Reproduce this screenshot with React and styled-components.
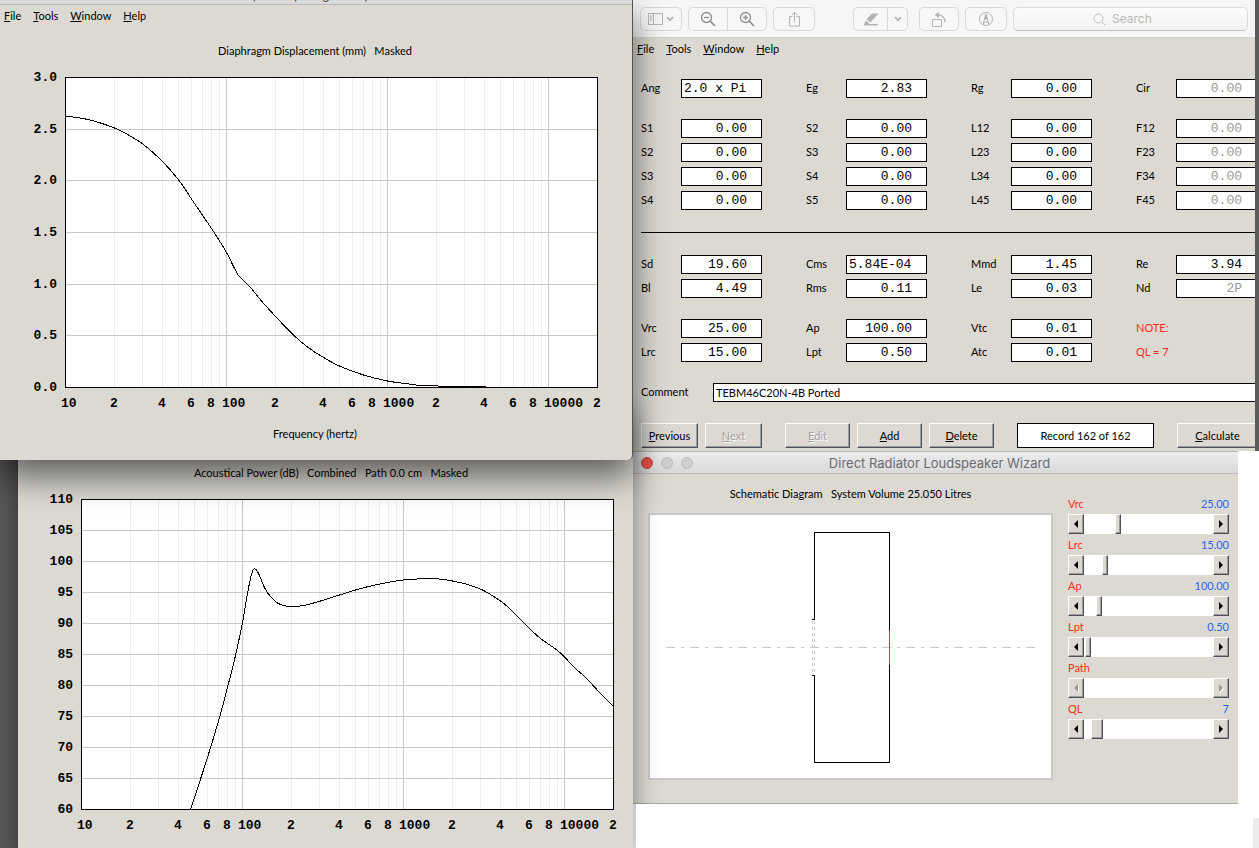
import React from "react";
import styled, { createGlobalStyle, css } from "styled-components";

const ui = `Lato, "Liberation Sans", Arial, sans-serif`;
const mono = `"Liberation Mono", "Courier New", monospace`;
const system = `Inter, Roboto, sans-serif`;
const face = "#dcd9d2";
const ruled = "#c8c8c8";

const Global = createGlobalStyle`
  *, *::before, *::after { box-sizing: border-box; }
  body {
    margin: 0;
    font-family: ${ui};
    font-size: 11px;
    line-height: 16px;
    color: #000;
  }
  button, input { font: inherit; color: inherit; margin: 0; }
`;

/* ---------- desktop and windows ---------- */

const Desktop = styled.main`
  position: relative;
  min-height: 100vh;
  overflow: hidden;
  background: #5a5a5a;
`;

const Window = styled.section`
  position: absolute;
  display: flex;
  flex-direction: column;
  overflow: hidden;
  background: ${face};
`;

const Page = styled(Window)`
  top: 451px;
  left: 633px;
  right: 0;
  bottom: 0;
  background: #fff;
`;

const PageFoot = styled(Window)`
  top: 804px;
  left: 636px;
  right: 0;
  bottom: 0;
  align-items: flex-end;
  justify-content: flex-end;
  background: #fff;
`;

const PageCorner = styled.div`
  width: 6px;
  height: 30px;
  background: #ececec;
`;

const RecordWindow = styled(Window)`
  top: 0;
  left: 633px;
  right: 4px;
  height: 451px;
`;

const WizardWindow = styled(Window)`
  top: 451px;
  left: 633px;
  right: 21px;
  height: 353px;
  border-top: 1px solid #b9b7b2;
  border-bottom: 1px solid #a9a8a4;
`;

const PowerWindow = styled(Window)`
  top: 403px;
  left: 18px;
  width: 615px;
  bottom: 0;
  box-shadow: 0 10px 24px rgba(0, 0, 0, 0.45);
`;

const DisplacementWindow = styled(Window)`
  top: 0;
  left: 0;
  width: 633px;
  height: 460px;
  border-right: 1px solid #55544f;
  border-radius: 0 0 5px 0;
  box-shadow: 0 16px 34px rgba(0, 0, 0, 0.58);
`;

const ClippedTitle = styled.header`
  display: flex;
  flex: none;
  justify-content: center;
  align-items: flex-end;
  height: 5px;
  padding-bottom: 2px;
  overflow: hidden;
  border-bottom: 1px solid #b9bbbe;
  background: #dadada;
  font: 13px/16px ${system};
  color: #4d4d4d;
`;

const MenuBar = styled.nav`
  display: flex;
  flex: none;
  gap: 12px;
  height: 22px;
  align-items: center;
  padding: 0 4px;
`;

const MenuItem = styled.button`
  padding: 0;
  border: 0;
  background: none;
  line-height: 16px;
  u { text-underline-offset: 1px; }
`;

const Menus = () => (
  <MenuBar>
    <MenuItem><u>F</u>ile</MenuItem>
    <MenuItem><u>T</u>ools</MenuItem>
    <MenuItem><u>W</u>indow</MenuItem>
    <MenuItem><u>H</u>elp</MenuItem>
  </MenuBar>
);

/* ---------- charts ---------- */

const ChartPane = styled.figure`
  display: flex;
  flex-direction: column;
  margin: 0;
  padding: ${(p) => p.$top}px 0 0 ${(p) => p.$left}px;
`;

const ChartTitle = styled.figcaption`
  width: 580px;
  text-align: center;
  white-space: pre;
`;

const Chart = styled.svg`
  display: block;
  flex: none;
  margin: 8px 0 15px;
  text {
    font: bold 13px ${mono};
  }
`;

const smooth = (pts) => {
  let d = `M${pts[0][0]} ${pts[0][1]}`;
  for (let i = 0; i < pts.length - 1; i++) {
    const a = pts[Math.max(i - 1, 0)];
    const b = pts[i];
    const c = pts[i + 1];
    const e = pts[Math.min(i + 2, pts.length - 1)];
    const x1 = b[0] + (c[0] - a[0]) / 6;
    const y1 = b[1] + (c[1] - a[1]) / 6;
    const x2 = c[0] - (e[0] - b[0]) / 6;
    const y2 = c[1] - (e[1] - b[1]) / 6;
    d += `C${x1.toFixed(1)} ${y1.toFixed(1)} ${x2.toFixed(1)} ${y2.toFixed(1)} ${c[0]} ${c[1]}`;
  }
  return d;
};

const decades = [0, 1, 2, 3];
const xOf = (decade, digit) => Math.ceil(161 * decade + 161 * Math.log10(digit));

const gridX = decades
  .flatMap((d) => [1, 2, 3, 4, 5, 6, 7, 8, 9].map((n) => ({ x: xOf(d, n), major: n === 1 })))
  .filter((g) => g.x > 0 && g.x < 530);

const ticksX = decades
  .flatMap((d) => [1, 2, 4, 6, 8].map((n) => ({ x: xOf(d, n) - 4, t: n === 1 ? String(10 ** (d + 1)) : String(n) })))
  .filter((g) => g.x < 530);

function FrequencyChart({ label, ticks, points }) {
  const step = 310 / (ticks.length - 1);
  return (
    <Chart width="580" height="344" viewBox="-40 -10 580 344" role="img" aria-label={label}>
      <rect x="0" y="0" width="532" height="310" fill="#fff" />
      <g shapeRendering="crispEdges" fill="none">
        {gridX.filter((g) => !g.major).map((g) => (
          <path key={g.x} d={`M${g.x + 0.5} 0V310`} stroke="#ededed" />
        ))}
        {gridX.filter((g) => g.major).map((g) => (
          <path key={g.x} d={`M${g.x + 0.5} 0V310`} stroke={ruled} />
        ))}
        {ticks.slice(1, -1).map((t, i) => (
          <path key={t} d={`M0 ${Math.round(step * (i + 1)) + 0.5}H532`} stroke={ruled} />
        ))}
        <rect x="0.5" y="0.5" width="532" height="310" stroke="#000" />
        <path d={smooth(points)} stroke="#000" transform="translate(0.5 0.5)" />
      </g>
      {ticks.map((t, i) => (
        <text key={t} x="-8" y={Math.round(step * i) + 4} textAnchor="end">{t}</text>
      ))}
      {ticksX.map((t) => (
        <text key={t.x} x={t.x} y="330">{t.t}</text>
      ))}
    </Chart>
  );
}

const displacement = [
  [0, 39], [7, 39.5], [20, 41.5], [35, 45.5], [49, 50.5], [63, 57.5], [78, 67], [97, 84], [114, 103.5],
  [128, 124.5], [148, 154], [161, 175], [168, 189], [173, 198], [177, 202], [185, 210], [196, 223.5],
  [211, 240], [228, 257.5], [242, 269.5], [258, 280], [275, 289], [298, 297.5], [322, 303.5], [340, 306],
  [355, 308], [372, 308.5], [390, 309], [420, 309],
];

const power = [
  [109, 310], [126, 258], [138, 218], [147, 184], [154, 156], [161, 123], [166, 94], [169, 79],
  [171, 72], [173, 69], [176, 72], [180, 81], [184, 90], [189, 97], [196, 103.5], [202, 106],
  [211, 107], [222, 106], [239, 101.5], [258, 95.5], [274, 90.5], [287, 87], [306, 83], [322, 80.5],
  [336, 79.5], [350, 79], [362, 80], [371, 81.5], [386, 85], [400, 90], [409, 95], [419, 101.5],
  [427, 108], [435, 116], [449, 130], [459, 139], [469, 146], [476, 151], [483, 157.5],
  [489, 164], [495, 170], [502, 176], [507, 181], [513, 187.5], [519, 194], [532, 207],
];

/* ---------- record window ---------- */

const Toolbar = styled.div`
  display: flex;
  flex: none;
  height: 38px;
  padding: 7px 7px 0;
  border-bottom: 1px solid #d2d2d2;
  background: #f6f6f6;
`;

const ToolButton = styled.button`
  display: flex;
  flex: none;
  align-items: center;
  justify-content: center;
  gap: 3px;
  width: ${(p) => p.$w}px;
  height: 24px;
  padding: 0;
  margin-right: ${(p) => p.$after || 0}px;
  border: 1px solid #d9d9d9;
  border-radius: 5px;
  background: #f7f7f7;
  color: ${(p) => (p.$dark ? "#8e8e8e" : "#b4b4b4")};
  ${(p) => p.$join === "left" && css`border-radius: 5px 0 0 5px; border-right: 0;`}
  ${(p) => p.$join === "right" && css`border-radius: 0 5px 5px 0;`}
`;

const SearchBox = styled.label`
  display: flex;
  flex: 1;
  align-items: center;
  justify-content: center;
  gap: 6px;
  height: 24px;
  border: 1px solid #dcdcdc;
  border-bottom-color: #c4c4c4;
  border-radius: 5px;
  background: linear-gradient(#fbfbfb, #f3f3f3);
  color: #bdbdbd;
`;

const SearchInput = styled.input`
  width: 56px;
  height: 18px;
  padding: 0;
  border: 0;
  outline: 0;
  appearance: none;
  background: none;
  font: 12px/18px ${system};
  &::placeholder { color: #b8b8b8; opacity: 1; }
  &::-webkit-search-cancel-button { display: none; }
`;

const Icon = ({ w = 16, h = 16, children }) => (
  <svg width={w} height={h} viewBox={`0 0 ${w} ${h}`} fill="none" stroke="currentColor" aria-hidden="true">
    {children}
  </svg>
);

const Chevron = () => (
  <Icon w={8} h={6}><path d="M1 1L4 4.2L7 1" strokeWidth="1.8" /></Icon>
);

const Form = styled.form`
  display: flex;
  flex-direction: column;
  gap: 21px;
  padding: 19px 0 0 8px;
`;

const FieldGrid = styled.div`
  display: grid;
  grid-template-columns: repeat(4, 121px);
  column-gap: 44px;
  row-gap: 5px;
`;

const FieldRow = styled.div`
  display: grid;
  grid-template-columns: ${(p) => (p.$wide ? "72px 1fr" : "40px 81px")};
  height: 19px;
  line-height: 18px;
`;

const FieldBox = styled.input`
  width: 100%;
  height: 19px;
  padding: 0 ${(p) => (p.$left ? 2 : 14)}px 0 2px;
  border: 1px solid #000;
  border-radius: 0;
  background: #fff;
  color: ${(p) => (p.$dim ? "#9a9a9a" : "#000")};
  font: 13px/17px ${mono};
  text-align: ${(p) => (p.$left ? "left" : "right")};
`;

const CommentBox = styled(FieldBox)`
  border-right: 0;
  font: 11px/17px ${ui};
`;

const Note = styled.span`
  height: 19px;
  line-height: 18px;
  color: #ff2a1a;
`;

const Divider = styled.hr`
  width: 100%;
  height: 1px;
  margin: 1px 0;
  border: 0;
  background: #000;
`;

const ButtonRow = styled.div`
  display: flex;
  gap: 7px;
`;

const bevel = css`
  border: 1px solid;
  border-color: #fff #4d5054 #4d5054 #fff;
  border-radius: 0;
  background: ${face};
  box-shadow: inset -1px -1px 0 #9c9c9a;
`;

const PushButton = styled.button`
  flex: none;
  width: ${(p) => p.$w}px;
  height: 25px;
  margin-right: ${(p) => p.$after || 0}px;
  padding: 1px 0 0;
  ${bevel}
  u { text-underline-offset: 1px; }
  &:disabled { color: #a3a19c; text-shadow: 1px 1px 0 #fff; }
`;

const RecordCount = styled.output`
  flex: none;
  width: 137px;
  height: 25px;
  margin-right: 16px;
  border: 1px solid #000;
  background: #fff;
  line-height: 23px;
  text-align: center;
`;

const fieldBlocks = [
  [["Ang", "2.0 x Pi"], ["Eg", "2.83"], ["Rg", "0.00"], ["Cir", "0.00", true]],
  [
    ["S1", "0.00"], ["S2", "0.00"], ["L12", "0.00"], ["F12", "0.00", true],
    ["S2", "0.00"], ["S3", "0.00"], ["L23", "0.00"], ["F23", "0.00", true],
    ["S3", "0.00"], ["S4", "0.00"], ["L34", "0.00"], ["F34", "0.00", true],
    ["S4", "0.00"], ["S5", "0.00"], ["L45", "0.00"], ["F45", "0.00", true],
  ],
  [
    ["Sd", "19.60"], ["Cms", "5.84E-04"], ["Mmd", "1.45"], ["Re", "3.94"],
    ["Bl", "4.49"], ["Rms", "0.11"], ["Le", "0.03"], ["Nd", "2P", true],
  ],
  [
    ["Vrc", "25.00"], ["Ap", "100.00"], ["Vtc", "0.01"], ["NOTE:"],
    ["Lrc", "15.00"], ["Lpt", "0.50"], ["Atc", "0.01"], ["QL = 7"],
  ],
];

function Fields({ block }) {
  return (
    <FieldGrid>
      {fieldBlocks[block].map(([name, value, dim], i) => {
        if (!value) return <Note key={i}>{name}</Note>;
        const id = `field-${block}-${i}`;
        return (
          <FieldRow key={i}>
            <label htmlFor={id}>{name}</label>
            <FieldBox id={id} defaultValue={value} $dim={dim} $left={value.length > 7} />
          </FieldRow>
        );
      })}
    </FieldGrid>
  );
}

/* ---------- wizard window ---------- */

const TitleBar = styled.header`
  display: grid;
  grid-template-columns: 60px 1fr 52px;
  align-items: center;
  flex: none;
  height: 22px;
  padding: 0 8px;
  border-bottom: 1px solid #b9b9b9;
  background: linear-gradient(#ececec, #d9d9d9);
`;

const Lights = styled.div`
  display: flex;
  gap: 8px;
`;

const Light = styled.button`
  width: 12px;
  height: 12px;
  padding: 0;
  border: 1px solid ${(p) => (p.$on ? "#d0453f" : "#bdbdbd")};
  border-radius: 50%;
  background: ${(p) => (p.$on ? "#e8534e" : "#cfcfcf")};
`;

const WindowTitle = styled.h1`
  margin: 0;
  font: 13px/18px ${system};
  color: #6b6b70;
  text-align: center;
`;

const WizardBody = styled.div`
  display: flex;
  align-items: flex-start;
  justify-content: space-between;
  padding: 12px 9px 0 15px;
`;

const Schematic = styled.figure`
  display: flex;
  flex-direction: column;
  gap: 11px;
  width: 405px;
  margin: 0;
`;

const SchematicTitle = styled.figcaption`
  text-align: center;
  white-space: pre;
`;

const SchematicBox = styled.div`
  border: 2px solid ${ruled};
  background: #fff;
  svg { display: block; }
`;

const Sliders = styled.div`
  display: flex;
  flex-direction: column;
  width: 161px;
  padding-top: 7px;
`;

const SliderHead = styled.div`
  display: flex;
  justify-content: space-between;
  height: 21px;
  padding-top: 3px;
  label { color: #ff2a1a; }
  output { color: #2a63ee; }
`;

const SliderBar = styled.div`
  display: flex;
  height: 20px;
`;

const StepButton = styled.button`
  display: flex;
  flex: none;
  align-items: center;
  justify-content: center;
  width: 16px;
  height: 20px;
  padding: 0;
  ${bevel}
  &:disabled { color: #9b9a96; }
  &:disabled svg { filter: drop-shadow(1px 1px 0 #fff); }
`;

const Range = styled.input`
  flex: 1;
  min-width: 0;
  height: 20px;
  appearance: none;
  background: #fff;
  outline: 0;
  &::-webkit-slider-thumb {
    appearance: none;
    width: ${(p) => p.$thumb}px;
    height: 20px;
    ${bevel}
    visibility: ${(p) => (p.$thumb ? "visible" : "hidden")};
  }
`;

const Arrow = ({ right }) => (
  <svg width="5" height="8" viewBox="0 0 5 8" fill="currentColor" aria-hidden="true">
    <path d={right ? "M0 0L4 4L0 8Z" : "M4 0L0 4L4 8Z"} />
  </svg>
);

const sliders = [
  { name: "Vrc", value: "25.00", pos: 25, thumb: 6 },
  { name: "Lrc", value: "15.00", pos: 15, thumb: 6 },
  { name: "Ap", value: "100.00", pos: 10, thumb: 6 },
  { name: "Lpt", value: "0.50", pos: 1, thumb: 6 },
  { name: "Path", value: "", pos: 0, thumb: 0 },
  { name: "QL", value: "7", pos: 6, thumb: 12 },
];

export default function App() {
  return (
    <>
      <Global />
      <Desktop>
        <Page aria-hidden="true" />

        <RecordWindow>
          <Toolbar>
            <ToolButton $w={42} $after={6} aria-label="Sidebar">
              <Icon w={15} h={12}>
                <path d="M.5 .5H14.5V11.5H.5ZM5.5 .5V11.5M2 3H4M2 5H4M2 7H4" />
              </Icon>
              <Chevron />
            </ToolButton>
            <ToolButton $w={39} $join="left" $dark aria-label="Zoom out">
              <Icon>
                <circle cx="6.5" cy="6.5" r="5" strokeWidth="1.3" />
                <path d="M10.2 10.2L15 15" strokeWidth="1.7" /><path d="M4 6.5H9" strokeWidth="1.3" />
              </Icon>
            </ToolButton>
            <ToolButton $w={40} $join="right" $after={6} $dark aria-label="Zoom in">
              <Icon>
                <circle cx="6.5" cy="6.5" r="5" strokeWidth="1.3" />
                <path d="M10.2 10.2L15 15" strokeWidth="1.7" /><path d="M4 6.5H9M6.5 4V9" strokeWidth="1.3" />
              </Icon>
            </ToolButton>
            <ToolButton $w={42} $after={38} aria-label="Share">
              <Icon w={13} h={16}>
                <path d="M4.5 5.5H1.5V15H11.5V5.5H8.5M6.5 11V1.5M3.8 4L6.5 1.2L9.2 4" />
              </Icon>
            </ToolButton>
            <ToolButton $w={34} $join="left" aria-label="Highlight">
              <Icon w={16} h={13}>
                <path d="M9 .5H15.5L7.5 9.5L3.5 6.5Z" fill="currentColor" stroke="none" />
                <path d="M2.8 7.4L6.5 10.2L4.5 11H14.5V12.5H.5Z" fill="currentColor" stroke="none" />
              </Icon>
            </ToolButton>
            <ToolButton $w={21} $join="right" $after={11} aria-label="Highlight colours"><Chevron /></ToolButton>
            <ToolButton $w={40} $after={6} aria-label="Rotate">
              <Icon w={16} h={15}>
                <path d="M1.5 7.5H10.5V14.5H1.5Z" />
                <path d="M6 3C11 2.4 14 5.5 14.3 10.5" strokeWidth="1.3" />
                <path d="M3.5 3L8 0V6Z" fill="currentColor" stroke="none" />
              </Icon>
            </ToolButton>
            <ToolButton $w={42} $after={6} aria-label="Markup">
              <Icon>
                <circle cx="8" cy="8" r="6.5" />
                <path d="M5 13.5L7 6.5L8 3L9 6.5L11 13.5L9.5 11H6.5Z" />
                <path d="M7 6.5L8 3L9 6.5V8H7Z" fill="currentColor" />
              </Icon>
            </ToolButton>
            <SearchBox>
              <Icon w={13} h={13}>
                <circle cx="5.5" cy="5.5" r="4.5" /><path d="M8.8 8.8L12.5 12.5" />
              </Icon>
              <SearchInput type="search" placeholder="Search" aria-label="Search" />
            </SearchBox>
          </Toolbar>
          <Menus />
          <Form onSubmit={(e) => e.preventDefault()}>
            <Fields block={0} />
            <Fields block={1} />
            <Divider />
            <Fields block={2} />
            <Fields block={3} />
            <FieldRow $wide>
              <label htmlFor="comment">Comment</label>
              <CommentBox id="comment" defaultValue="TEBM46C20N-4B Ported" $left />
            </FieldRow>
            <ButtonRow>
              <PushButton $w={57}><u>P</u>revious</PushButton>
              <PushButton $w={57} $after={16} disabled><u>N</u>ext</PushButton>
              <PushButton $w={65} disabled><u>E</u>dit</PushButton>
              <PushButton $w={65}><u>A</u>dd</PushButton>
              <PushButton $w={65} $after={16}><u>D</u>elete</PushButton>
              <RecordCount>Record 162 of 162</RecordCount>
              <PushButton $w={81}><u>C</u>alculate</PushButton>
            </ButtonRow>
          </Form>
        </RecordWindow>

        <WizardWindow>
          <TitleBar>
            <Lights>
              <Light $on aria-label="Close" />
              <Light aria-label="Minimise" />
              <Light aria-label="Zoom" />
            </Lights>
            <WindowTitle>Direct Radiator Loudspeaker Wizard</WindowTitle>
          </TitleBar>
          <WizardBody>
            <Schematic>
              <SchematicTitle>{"Schematic Diagram   System Volume 25.050 Litres"}</SchematicTitle>
              <SchematicBox>
                <svg width="401" height="263" viewBox="0 0 401 263" fill="none" stroke="#000" shapeRendering="crispEdges" role="img" aria-label="Loudspeaker enclosure">
                  <path d="M16 132.5H386" stroke={ruled} strokeDasharray="9 6 3 6" />
                  <path d="M162.5 106V160M164.5 106V160" stroke={ruled} strokeDasharray="3 3" />
                  <path d="M162 104.5H164.5V17.5H239.5V247.5H164.5V160.5H162" />
                  <path d="M239.5 115V150" stroke="#ff2a1a" />
                </svg>
              </SchematicBox>
            </Schematic>
            <Sliders>
              {sliders.map((s) => (
                <div key={s.name}>
                  <SliderHead>
                    <label htmlFor={`slider-${s.name}`}>{s.name}</label>
                    <output>{s.value}</output>
                  </SliderHead>
                  <SliderBar>
                    <StepButton disabled={!s.thumb} aria-label={`Decrease ${s.name}`}><Arrow /></StepButton>
                    <Range type="range" id={`slider-${s.name}`} defaultValue={s.pos} $thumb={s.thumb} disabled={!s.thumb} />
                    <StepButton disabled={!s.thumb} aria-label={`Increase ${s.name}`}><Arrow right /></StepButton>
                  </SliderBar>
                </div>
              ))}
            </Sliders>
          </WizardBody>
        </WizardWindow>

        <PowerWindow>
          <ChartPane $top={62} $left={23}>
            <ChartTitle>{"Acoustical Power (dB)   Combined   Path 0.0 cm   Masked"}</ChartTitle>
            <FrequencyChart
              label="Acoustical power against frequency"
              ticks={["110", "105", "100", "95", "90", "85", "80", "75", "70", "65", "60"]}
              points={power}
            />
          </ChartPane>
        </PowerWindow>

        <PageFoot aria-hidden="true"><PageCorner /></PageFoot>

        <DisplacementWindow>
          <ClippedTitle>Hornresp - Diaphragm Displacement</ClippedTitle>
          <Menus />
          <ChartPane $top={16} $left={25}>
            <ChartTitle>{"Diaphragm Displacement (mm)   Masked"}</ChartTitle>
            <FrequencyChart
              label="Diaphragm displacement against frequency"
              ticks={["3.0", "2.5", "2.0", "1.5", "1.0", "0.5", "0.0"]}
              points={displacement}
            />
            <ChartTitle as="div">Frequency (hertz)</ChartTitle>
          </ChartPane>
        </DisplacementWindow>
      </Desktop>
    </>
  );
}
